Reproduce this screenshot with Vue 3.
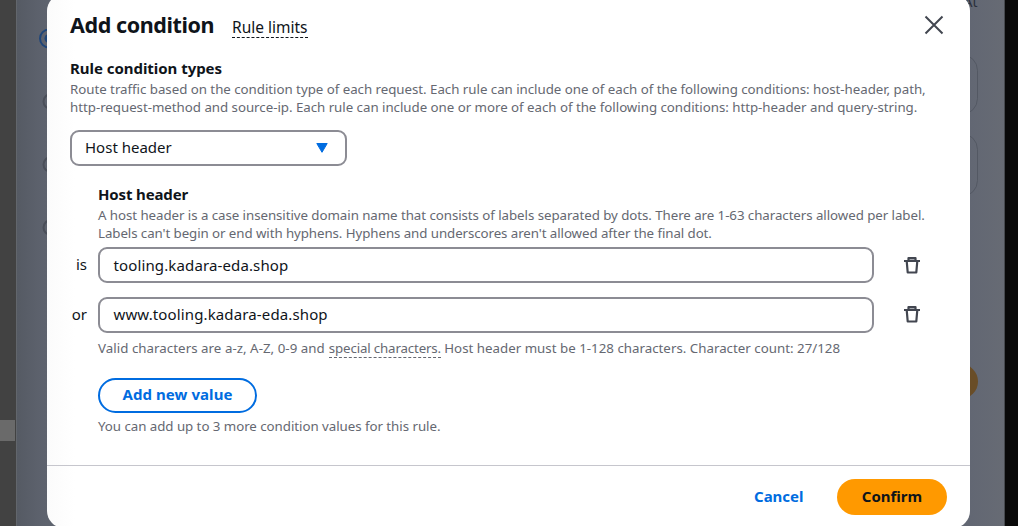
<script setup>
import { ref } from 'vue'

const rows = ref([
  { label: 'is', value: 'tooling.kadara-eda.shop' },
  { label: 'or', value: 'www.tooling.kadara-eda.shop' },
])
</script>

<template>
  <main class="screen">
    <div class="rail"><div class="thumb"></div></div>
    <div class="edge"></div>
    <svg class="behind" width="1018" height="526" viewBox="0 0 1018 526" fill="none">
      <circle cx="49" cy="38.5" r="9" stroke="#1f4679" stroke-width="2" />
      <circle cx="49" cy="38.5" r="4.5" fill="#1f4679" />
      <g stroke="#4b4f59" stroke-width="2">
        <circle cx="51" cy="101.5" r="7.5" />
        <circle cx="51" cy="164.5" r="7.5" />
        <circle cx="51" cy="227.5" r="7.5" />
      </g>
      <rect x="900" y="54.5" width="77.5" height="60" rx="16" stroke="#535863" />
      <rect x="900" y="133.5" width="77.5" height="63" rx="16" stroke="#535863" />
      <rect x="900" y="364" width="78" height="35" rx="17.5" fill="#694d27" />
      <text class="behind-text" x="977.5" y="7" text-anchor="end">At</text>
    </svg>

    <section class="modal">
      <header class="head">
        <h1>Add condition</h1>
        <a class="limits">Rule limits</a>
        <svg class="close" width="20" height="20" viewBox="0 0 20 20">
          <path d="M1.5 1.5 18.5 18.5M18.5 1.5 1.5 18.5" fill="none" stroke="#424650" stroke-width="2" />
        </svg>
      </header>

      <div class="types">
        <h2>Rule condition types</h2>
        <p class="hint">
          <span class="ln l1">Route traffic based on the condition type of each request. Each rule can include one of each of the following conditions: host-header, path,</span>
          <span class="ln l2">http-request-method and source-ip. Each rule can include one or more of each of the following conditions: http-header and query-string.</span>
        </p>
        <div class="select">
          <span class="chosen">Host header</span>
          <svg width="12" height="10" viewBox="0 0 12 10"><path d="M.8.5h10.4L6 9.3z" fill="#006ce0" stroke="#006ce0" stroke-linejoin="round" /></svg>
        </div>
      </div>

      <div class="values">
        <h2 class="host">Host header</h2>
        <p class="hint">
          <span class="ln l3">A host header is a case insensitive domain name that consists of labels separated by dots. There are 1-63 characters allowed per label.</span>
          <span class="ln l4">Labels can't begin or end with hyphens. Hyphens and underscores aren't allowed after the final dot.</span>
        </p>
        <div class="rows">
          <div v-for="row in rows" :key="row.label" class="row">
            <span class="lab">{{ row.label }}</span>
            <div class="input">{{ row.value }}</div>
            <svg class="trash" width="16" height="18" viewBox="0 0 16 18">
              <path d="M4.5 1h7v3h-7z" fill="#a6a9b0" />
              <path d="M0 5h16M4.5 5V2h7v3M2.7 5l1 11.5h8.600L13.3 5" fill="none" stroke="#424650" stroke-width="2.2" stroke-linejoin="round" />
            </svg>
          </div>
        </div>
        <p class="hint valid">
          <span class="v1">Valid characters are a-z, A-Z, 0-9 and</span>
          <a class="special">special characters.</a>
          <span class="v2">Host header must be 1-128 characters. Character count: 27/128</span>
        </p>
        <button class="add">Add new value</button>
        <p class="hint more">You can add up to 3 more condition values for this rule.</p>
      </div>

      <footer class="foot">
        <button class="cancel">Cancel</button>
        <button class="confirm">Confirm</button>
      </footer>
    </section>
  </main>
</template>

<style>
body { margin: 0; overflow: hidden; }
</style>

<style scoped>
.screen {
  position: relative;
  box-sizing: border-box;
  width: 1018px;
  height: 526px;
  overflow: hidden;
  padding-left: 47px;
  display: flex;
  align-items: flex-start;
  background: linear-gradient(90deg, #555a63 16px, #5c616c 38px, #5e636e 47px, #626773 970px, #676b74 1004px);
  color: #0f141a;
  font: 15px/18px "Noto Sans", "Open Sans", sans-serif;
}
.rail {
  position: absolute;
  inset: 0 auto 0 0;
  width: 16px;
  box-sizing: border-box;
  padding-top: 420px;
  background: #424242;
  box-shadow: 1px 0 #62666c;
}
.thumb { width: 15px; height: 21px; background: #6a6a6a; }
.edge {
  position: absolute;
  inset: 0 0 0 auto;
  width: 13px;
  background: #090909;
  box-shadow: -1px 0 #46494e;
}
.behind { position: absolute; inset: 0; }
.behind-text { font: 14px "Noto Sans", sans-serif; fill: #2b303b; }
.modal {
  position: relative;
  display: flex;
  flex-direction: column;
  width: 923px;
  height: 534px;
  margin-top: -6px;
  border-radius: 17px;
  background: linear-gradient(90deg, #fbfbfb, #fff 28px);
  overflow: hidden;
  flex: none;
}
h1, h2, p { margin: 0; white-space: nowrap; }
.head {
  box-sizing: border-box;
  display: flex;
  align-items: baseline;
  height: 48px;
  padding: 17px 26px 0 23px;
}
h1 { font-size: 21.5px; line-height: 28px; letter-spacing: -.4px; width: 162px; }
.limits {
  font-size: 15.5px;
  line-height: 20px;
  border-bottom: 1px dashed #0f141a;
  height: 20px;
}
.close { margin-left: auto; align-self: flex-start; margin-top: 4px; }
.types { box-sizing: border-box; height: 126px; padding: 0 23px; }
.types h2 { padding-top: 17px; letter-spacing: -.04px; }
h2 { font-size: 15px; line-height: 18px; }
.hint { font-size: 13.3px; line-height: 18px; color: #656871; padding-top: 3px; }
.ln { display: block; }
.l1, .l2 { letter-spacing: -.03px; }
.l3 { letter-spacing: -.058px; }
.l4 { letter-spacing: -.074px; }
.select, .input {
  box-sizing: border-box;
  height: 36px;
  border: 2px solid #8c8c94;
  border-radius: 9px;
  background: #fff;
  display: flex;
  align-items: center;
}
.types .hint { height: 53px; box-sizing: border-box; }
.select { width: 277px; padding: 0 17px 1px 13px; justify-content: space-between; }
.chosen { padding-bottom: 2px; }
.values { height: 297px; box-sizing: border-box; padding: 17px 0 0 51px; }
.host { letter-spacing: -.14px; }
.rows { display: grid; gap: 14px; margin: 5px 0 0 -51px; }
.row { display: flex; align-items: center; height: 36px; }
.lab { width: 40px; margin-right: 11px; text-align: right; padding-bottom: 3px; }
.input { width: 776px; padding: 0 13.5px 1px; letter-spacing: .13px; }
.row:last-child .input { padding-bottom: 3px; }
.trash { margin-left: 30px; }
.row:last-child .trash { margin-bottom: 2px; }
.valid { display: flex; gap: 4px; padding-top: 6px; }
.v1 { letter-spacing: .04px; }
.v2 { letter-spacing: .01px; }
.special { letter-spacing: -.15px; border-bottom: 1px dashed #656871; height: 18px; }
.v2 { margin-left: -.8px; }
button { font: bold 15px/18px "Noto Sans", sans-serif; box-sizing: border-box; padding: 0; margin: 0; border: 0; background: none; }
.add {
  display: block;
  width: 159px;
  height: 35px;
  margin-top: 20px;
  padding-bottom: 4px;
  border: 2px solid #006ce0;
  border-radius: 18px;
  color: #006ce0;
  letter-spacing: .07px;
}
.more { padding-top: 4px; letter-spacing: -.04px; }
.foot {
  box-sizing: border-box;
  flex: 1;
  display: flex;
  justify-content: flex-end;
  align-items: flex-start;
  padding: 13px 23px 0;
  border-top: 1px solid #c6c6cd;
}
.cancel { color: #006ce0; height: 36px; width: 49px; margin-right: 34px; padding-bottom: 3px; white-space: nowrap; }
.confirm { width: 110px; height: 36px; border-radius: 18px; background: #ff9900; color: #0f141a; padding-bottom: 3px; }
</style>
